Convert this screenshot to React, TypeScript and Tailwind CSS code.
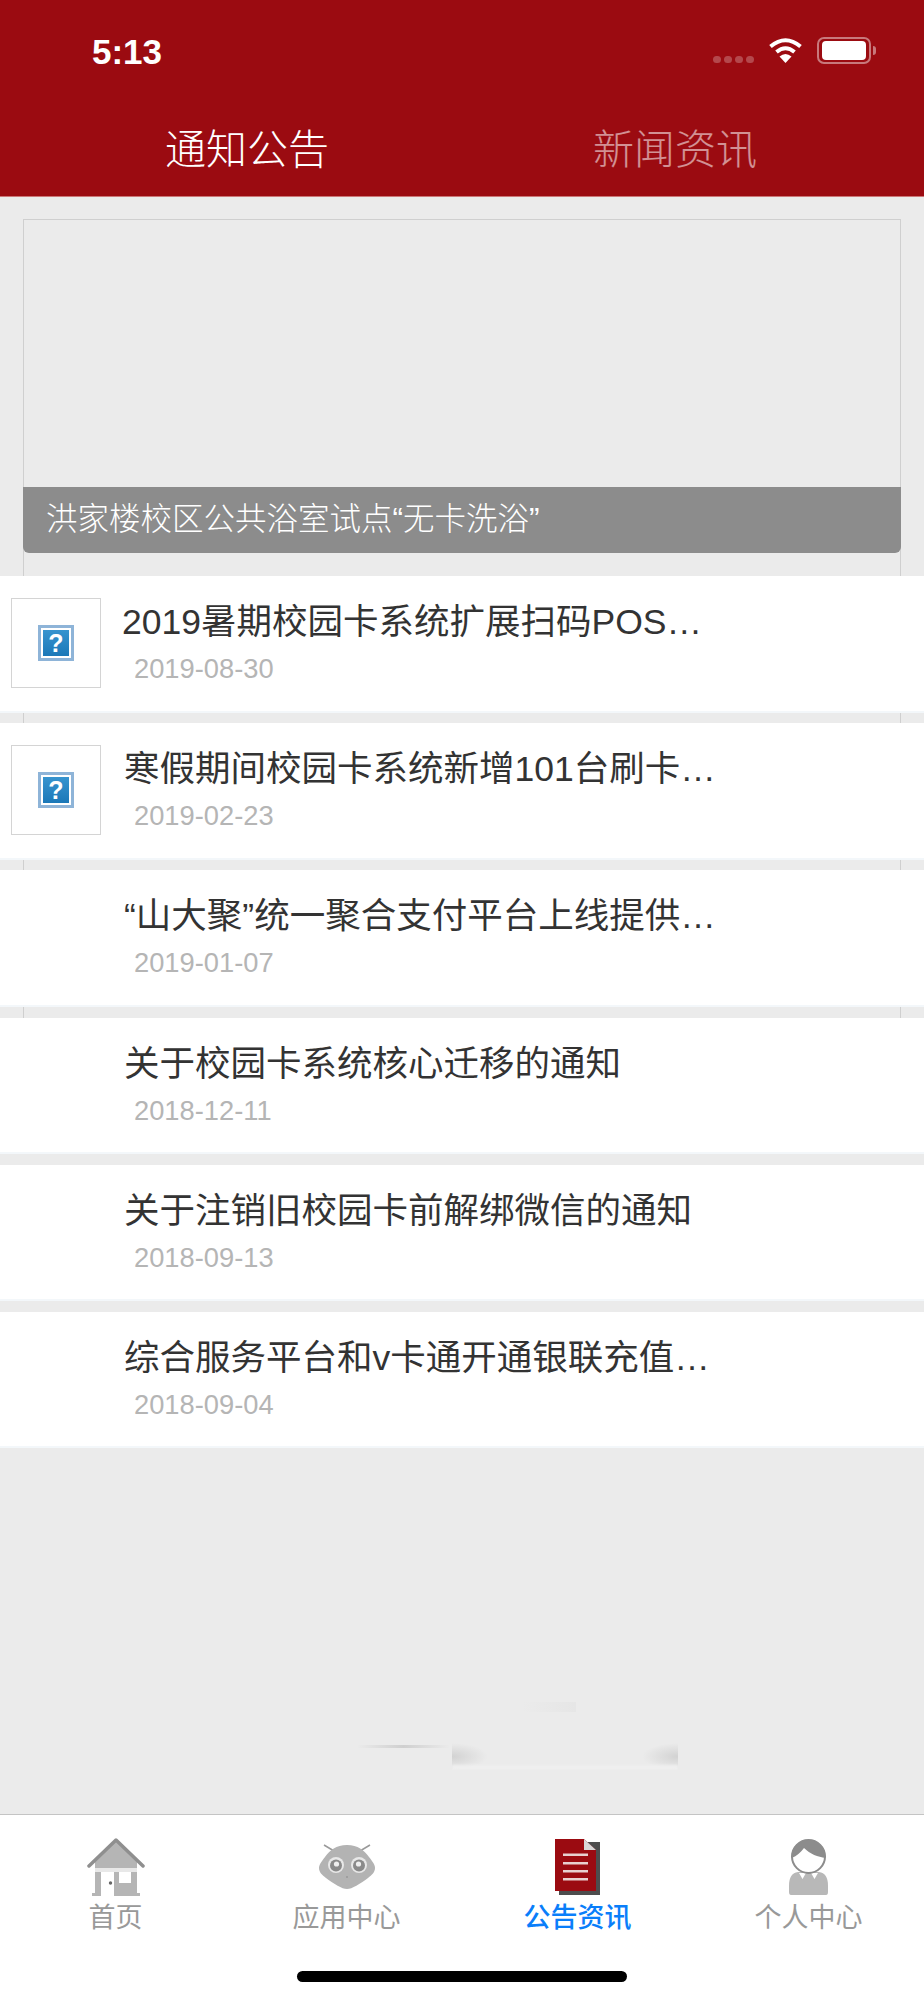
const items = [
  { title: "2019暑期校园卡系统扩展扫码POS…", date: "2019-08-30", broken: true, indent: "pl-[122px]", dateIndent: "pl-[12px]" },
  { title: "寒假期间校园卡系统新增101台刷卡…", date: "2019-02-23", broken: true, indent: "pl-[124px]", dateIndent: "pl-[10px]" },
  { title: "“山大聚”统一聚合支付平台上线提供…", date: "2019-01-07", broken: false, indent: "pl-[124px]", dateIndent: "pl-[10px]" },
  { title: "关于校园卡系统核心迁移的通知", date: "2018-12-11", broken: false, indent: "pl-[124px]", dateIndent: "pl-[10px]" },
  { title: "关于注销旧校园卡前解绑微信的通知", date: "2018-09-13", broken: false, indent: "pl-[124px]", dateIndent: "pl-[10px]" },
  { title: "综合服务平台和v卡通开通银联充值…", date: "2018-09-04", broken: false, indent: "pl-[124px]", dateIndent: "pl-[10px]" },
];

function StatusBar() {
  return (
    <div className="flex h-[100px] items-start justify-between pl-[92px] pr-[53px] pt-[32px]">
      <span className="text-[35px] leading-[40px] font-bold text-white">5:13</span>
      <div className="flex items-start pt-[5px]">
        <div className="mt-[19px] mr-[14px] flex gap-[3px]">
          <span className="h-[7px] w-[8px] rounded-full bg-white/25" />
          <span className="h-[7px] w-[8px] rounded-full bg-white/25" />
          <span className="h-[7px] w-[8px] rounded-full bg-white/25" />
          <span className="h-[7px] w-[8px] rounded-full bg-white/25" />
        </div>
        <svg width="35" height="27" viewBox="0 0 35 27" className="mr-[14px]">
          <path d="M2.500 9.500 Q17.500 -3 32.500 9.500" fill="none" stroke="#fff" strokeWidth="4" />
          <path d="M8.500 15 Q17.500 7.500 26.500 15" fill="none" stroke="#fff" strokeWidth="4" />
          <path d="M17.500 26 L11.500 19.500 Q17.500 14.500 23.500 19.500 Z" fill="#fff" />
        </svg>
        <div className="relative flex h-[27px] w-[54px] items-center justify-center rounded-[7px] border-2 border-white/45">
          <div className="h-[19px] w-[44px] rounded-[4px] bg-white" />
          <span className="absolute -right-[7px] top-[7px] h-[9px] w-[3px] rounded-r-full bg-white/45" />
        </div>
      </div>
    </div>
  );
}

function HouseIcon() {
  return (
    <svg width="58" height="58" viewBox="0 0 58 58">
      <path d="M29 3 L8 24 V55 H50 V24 Z" fill="#b5b5b5" />
      <rect x="8" y="30" width="42" height="4" fill="#e8e8e8" />
      <rect x="14" y="34" width="13" height="24" fill="#fff" />
      <rect x="32" y="34" width="12" height="11" fill="#fff" />
      <circle cx="23.500" cy="45" r="1.700" fill="#666" />
      <rect x="5" y="55" width="9" height="3" fill="#b5b5b5" />
      <rect x="27" y="55" width="26" height="3" fill="#b5b5b5" />
      <path d="M2 28 L29 2 L56 28" fill="none" stroke="#8f8f8f" strokeWidth="3.500" strokeLinecap="round" strokeLinejoin="round" />
    </svg>
  );
}

function RobotIcon() {
  return (
    <svg width="58" height="58" viewBox="0 0 58 58">
      <path d="M6 7 L16 13 M52 7 L42 13" stroke="#9a9a9a" strokeWidth="1.500" />
      <path d="M29 7 C40 7 46 12 51 19 C55 24 57 27 57 30 C57 34 54 37 50 40 C42 46 34 51 29 51 C24 51 16 46 8 40 C4 37 1 34 1 30 C1 27 3 24 7 19 C12 12 18 7 29 7 Z" fill="#b3b3b3" />
      <circle cx="18" cy="27" r="8" fill="#e8e8e8" />
      <circle cx="41" cy="27" r="8" fill="#e8e8e8" />
      <circle cx="18" cy="27.500" r="6" fill="#8a8a8a" />
      <circle cx="41" cy="27.500" r="6" fill="#8a8a8a" />
      <circle cx="18.500" cy="26" r="2.600" fill="#eee" />
      <circle cx="40.500" cy="26" r="2.600" fill="#eee" />
      <circle cx="29" cy="39" r="1" fill="#999" />
    </svg>
  );
}

function DocIcon() {
  return (
    <svg width="45" height="56" viewBox="0 0 45 56">
      <path d="M4 3 H45 V56 H4 Z" fill="#4d4d4d" />
      <path d="M0 0 H29 L41 11 V52 H0 Z" fill="#9b0b11" />
      <path d="M29 0 L41 11 H29 Z" fill="#d8d8d8" />
      <rect x="8" y="14.500" width="25" height="2.500" fill="#e8d0d0" />
      <rect x="8" y="23" width="25" height="2.500" fill="#e8d0d0" />
      <rect x="8" y="31" width="25" height="2.500" fill="#e8d0d0" />
      <rect x="8" y="39" width="25" height="2.500" fill="#e8d0d0" />
    </svg>
  );
}

function PersonIcon() {
  return (
    <svg width="39" height="56" viewBox="0 0 39 56">
      <path d="M0 53 V47 C0 38 3 34 9 33 H30 C36 34 39 38 39 47 V53 Q39 56 37 56 H2 Q0 56 0 53 Z" fill="#b8b8b8" />
      <path d="M10 34 L17 34 L13.500 40 Z M22 34 L29 34 L25.500 40 Z" fill="#fff" />
      <circle cx="19.500" cy="17.500" r="16.500" fill="#fff" stroke="#8c8c8c" strokeWidth="2" />
      <path d="M2.500 19 C2 8 10 1 19.500 1 C29 1 37 8 36.500 19 C29 18 21 15 15 9 C12 13 8 17 2.500 19 Z" fill="#8c8c8c" />
    </svg>
  );
}

function BrokenImage() {
  return (
    <div className="flex h-[90px] w-[90px] shrink-0 items-center justify-center border border-[#d4d4d4] bg-white">
      <div className="flex h-[36px] w-[36px] items-center justify-center border-[3px] border-[#8eb4d8] bg-white p-[2px]">
        <div className="flex h-full w-full items-center justify-center bg-gradient-to-b from-[#3794cf] to-[#1a78b8] font-['Liberation_Sans'] text-[25px] leading-none font-bold text-white">
          ?
        </div>
      </div>
    </div>
  );
}

function NewsRow({ title, date, broken, indent, dateIndent }: (typeof items)[number]) {
  return (
    <div className="relative h-[136.5px] border-b-2 border-[#f3f7fa] bg-white">
      {broken && (
        <div className="absolute top-[22px] left-[11px]">
          <BrokenImage />
        </div>
      )}
      <div className={`${indent} pt-[24px]`}>
        <div className="text-[35.5px] leading-[44px] whitespace-nowrap text-[#333333]">{title}</div>
        <div className={`${dateIndent} mt-[9px] text-[27.3px] leading-[32px] text-[#b5b5b5]`}>{date}</div>
      </div>
    </div>
  );
}

function TabItem({ icon, label, active }: { icon: React.ReactNode; label: string; active?: boolean }) {
  return (
    <div className="flex flex-1 flex-col items-center">
      <div className="flex h-[58px] items-center justify-center">{icon}</div>
      <span className={`mt-[6px] text-[27px] leading-[32px] ${active ? "font-medium text-[#0a7efa]" : "text-[#999999]"}`}>
        {label}
      </span>
    </div>
  );
}

export default function App() {
  return (
    <div className="relative flex h-[2000px] w-[924px] flex-col overflow-hidden bg-[#ebebeb] font-['Liberation_Sans','Noto_Sans_CJK_SC',sans-serif]">
      {/* Red header */}
      <div className="h-[197px] shrink-0 border-b border-[#c77] bg-[#9b0b11]">
        <StatusBar />
        <div className="flex gap-[264px] pt-[28px] pl-[165px]">
          <div className="text-[41px] leading-[44px] font-light text-white">通知公告</div>
          <div className="text-[41px] leading-[44px] font-light text-white/55">新闻资讯</div>
        </div>
      </div>

      {/* Banner: frame keeps running behind the list */}
      <div className="relative mx-[23px] mt-[22px] h-[334px] shrink-0">
        <div className="absolute inset-x-0 top-0 h-[880px] border-x border-t border-[#cfcfcf]" />
        <div className="absolute inset-x-0 bottom-0 flex h-[66px] items-center rounded-b-[6px] bg-[#8c8c8c] pl-[23px] text-[31.5px] font-light text-white">
          洪家楼校区公共浴室试点“无卡洗浴”
        </div>
      </div>

      <div className="relative mt-[23px] flex flex-col gap-[10.7px]">
        {items.map((item) => (
          <NewsRow key={item.date} {...item} />
        ))}
      </div>

      {/* faint leftover of the launch image */}
      <div className="absolute top-[1702px] left-[522px] h-[10px] w-[54px] bg-gradient-to-r from-transparent to-[#e6e6e6]" />
      <div className="absolute top-[1745px] left-[357px] h-[3px] w-[93px] bg-gradient-to-r from-transparent via-[#cfcfcf] to-transparent" />
      <div className="absolute top-[1743px] left-[452px] h-[27px] w-[226px] overflow-hidden">
        <div className="absolute inset-y-0 left-0 w-[36px] bg-[radial-gradient(ellipse_at_left,#d2d2d2,transparent_70%)]" />
        <div className="absolute inset-y-0 right-0 w-[36px] bg-[radial-gradient(ellipse_at_right,#d2d2d2,transparent_70%)]" />
        <div className="absolute inset-x-0 bottom-0 h-[5px] bg-[#efefef] blur-[1px]" />
      </div>

      {/* Tab bar */}
      <div className="absolute inset-x-0 bottom-0 h-[186px] border-t border-[#c4c4c4] bg-white pt-[23px]">
        <div className="flex">
          <TabItem icon={<HouseIcon />} label="首页" />
          <TabItem icon={<RobotIcon />} label="应用中心" />
          <TabItem icon={<DocIcon />} label="公告资讯" active />
          <TabItem icon={<PersonIcon />} label="个人中心" />
        </div>
        <div className="absolute bottom-[18px] left-[297px] h-[11px] w-[330px] rounded-full bg-black" />
      </div>
    </div>
  );
}
